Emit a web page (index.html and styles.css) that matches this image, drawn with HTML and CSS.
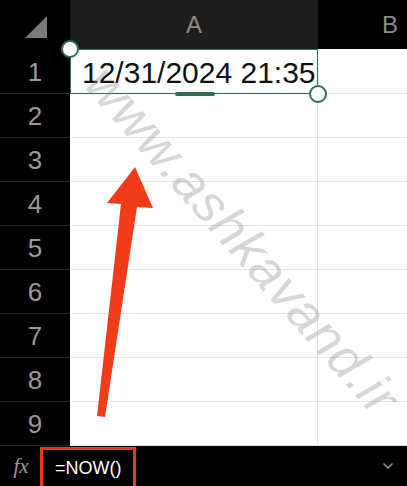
FILE: index.html
```html
<!DOCTYPE html>
<html lang="en">
<head>
    <meta charset="UTF-8">
    <meta name="viewport" content="width=device-width, initial-scale=1.0">
    <title>Sheet - NOW()</title>
    <link rel="stylesheet" href="styles.css">
</head>
<body>
    <div class="sheet">
        <!-- Column headers -->
        <div class="row header-row">
            <div class="corner">
                <svg width="70" height="49" viewBox="0 0 70 49"><polygon points="25,38 47,38 47,16" fill="#7b7b7b"/></svg>
            </div>
            <div class="col-head col-a">A</div>
            <div class="col-head col-b">B</div>
        </div>

        <div class="row first-row">
            <div class="row-head">1</div>
            <div class="cell cell-a selected">
                12/31/2024 21:35
                <span class="handle handle-tl"></span>
                <span class="handle handle-br"></span>
                <span class="fill-bar"></span>
            </div>
            <div class="cell"></div>
        </div>
        <div class="row"><div class="row-head">2</div><div class="cell cell-a"></div><div class="cell"></div></div>
        <div class="row"><div class="row-head">3</div><div class="cell cell-a"></div><div class="cell"></div></div>
        <div class="row"><div class="row-head">4</div><div class="cell cell-a"></div><div class="cell"></div></div>
        <div class="row"><div class="row-head">5</div><div class="cell cell-a"></div><div class="cell"></div></div>
        <div class="row"><div class="row-head">6</div><div class="cell cell-a"></div><div class="cell"></div></div>
        <div class="row"><div class="row-head">7</div><div class="cell cell-a"></div><div class="cell"></div></div>
        <div class="row"><div class="row-head">8</div><div class="cell cell-a"></div><div class="cell"></div></div>
        <div class="row"><div class="row-head">9</div><div class="cell cell-a"></div><div class="cell"></div></div>

        <!-- Formula bar -->
        <div class="formula-bar">
            <span class="fx">fx</span>
            <div class="formula-box">=NOW()</div>
            <span class="chevron">
                <svg width="12" height="8" viewBox="0 0 12 8"><polyline points="1.5,1.5 6,6 10.5,1.5" fill="none" stroke="#9a9a9a" stroke-width="1.4"/></svg>
            </span>
        </div>

        <!-- Overlays -->
        <div class="watermark">www.ashkavand.ir</div>
        <svg class="arrow" width="407" height="486" viewBox="0 0 407 486">
            <polygon points="135,167 153,208 137,207 105,417 97,416 121,204 107,203" fill="#f13c19"/>
        </svg>
    </div>
</body>
</html>
```

FILE: styles.css
```css
:root {
    --green: #2f6f50;
    --grid: #e3e3e3;
    --head-text: #9a9a9a;
}

body {
    margin: 0;
    background: #000;
    font-family: 'Liberation Sans', Arial, sans-serif;
}

.sheet {
    position: relative;
    width: 407px;
    height: 486px;
    overflow: hidden;
    display: flex;
    flex-direction: column;
}

.row {
    display: grid;
    grid-template-columns: 70px 248px 1fr;
    height: 44px;
}

.header-row {
    height: 49px;
}

.first-row {
    height: 45px;
}

.corner {
    background: #000;
}

.corner svg {
    display: block;
}

.col-head {
    display: flex;
    align-items: center;
    justify-content: center;
    color: #8a8a8a;
    font-size: 24px;
}

.col-a {
    background: #1d1d1d;
}

.col-b {
    background: #000;
    justify-content: flex-end;
    padding-right: 9px;
}

.row-head {
    background: #000;
    color: var(--head-text);
    font-size: 26px;
    display: flex;
    align-items: center;
    justify-content: center;
    border-bottom: 1px solid #262626;
    box-sizing: border-box;
    padding-top: 2px;
}

.cell {
    background: #fff;
    border-bottom: 1px solid var(--grid);
    box-sizing: border-box;
}

.cell-a {
    border-right: 1px solid var(--grid);
}

.selected {
    position: relative;
    border: 1.5px solid var(--green);
    font-size: 30px;
    color: #111;
    display: flex;
    align-items: center;
    padding-left: 11px;
    padding-top: 2px;
}

.handle {
    position: absolute;
    width: 14px;
    height: 14px;
    border: 2px solid var(--green);
    border-radius: 50%;
    background: #fff;
}

.handle-tl {
    left: -10px;
    top: -10px;
}

.handle-br {
    right: -10px;
    bottom: -10px;
}

.fill-bar {
    position: absolute;
    left: 104px;
    bottom: -3px;
    width: 40px;
    height: 4px;
    border-radius: 2px;
    background: var(--green);
}

.formula-bar {
    flex: 1;
    background: #000;
    display: flex;
    align-items: stretch;
    position: relative;
}

.fx {
    font-family: 'Liberation Serif', serif;
    font-style: italic;
    color: #9a9a9a;
    font-size: 21px;
    width: 38px;
    display: flex;
    align-items: center;
    justify-content: center;
    padding-left: 2px;
}

.formula-box {
    width: 96px;
    border: 3px solid #e8391b;
    border-bottom: none;
    box-sizing: border-box;
    margin-top: 1px;
    color: #fff;
    font-size: 18px;
    display: flex;
    align-items: center;
    padding-left: 12px;
    padding-top: 1px;
}

.chevron {
    margin-left: auto;
    margin-right: 13px;
    display: flex;
    align-items: center;
}

.watermark {
    position: absolute;
    left: 243px;
    top: 240px;
    transform: translate(-50%, -50%) rotate(48.7deg);
    font-size: 53px;
    font-style: italic;
    color: rgba(140, 140, 140, 0.36);
    white-space: nowrap;
    letter-spacing: 1px;
    pointer-events: none;
}

.arrow {
    position: absolute;
    left: 0;
    top: 0;
    pointer-events: none;
}
```
